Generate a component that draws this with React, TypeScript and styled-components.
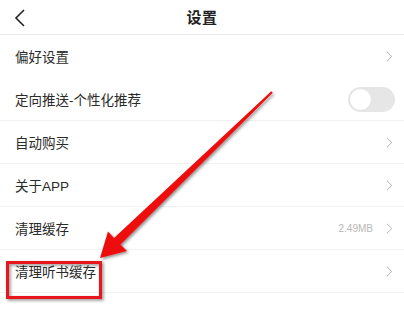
import React from "react";
import styled, { createGlobalStyle } from "styled-components";

const Global = createGlobalStyle`
  html, body { margin: 0; padding: 0; background: #fff; }
  body { font-family: "Liberation Sans", "Noto Sans CJK SC", sans-serif; }
`;

const Page = styled.div`
  position: relative;
  width: 404px;
  height: 322px;
  background: #fff;
  overflow: hidden;
`;

const Header = styled.div`
  height: 35px;
  display: flex;
  align-items: center;
  justify-content: center;
  position: relative;
  border-bottom: 1px solid #ececec;
  box-sizing: border-box;
`;

const BackButton = styled.div`
  position: absolute;
  left: 13px;
  top: 9px;
  width: 14px;
  height: 18px;
  display: flex;
`;

const Title = styled.div`
  font-size: 15px;
  font-weight: 700;
  color: #222;
  letter-spacing: 0.5px;
  margin-top: -1px;
`;

const List = styled.div`
  display: flex;
  flex-direction: column;
`;

const Row = styled.div<{ $divider?: boolean }>`
  height: 43px;
  box-sizing: border-box;
  display: flex;
  align-items: center;
  padding: 0 11px 0 15px;
  border-bottom: 1px solid ${(p) => (p.$divider ? "#f1f1f1" : "transparent")};
`;

const Label = styled.div`
  flex: 1;
  font-size: 13.5px;
  color: #2a2a2a;
`;

const Value = styled.div`
  font-size: 10px;
  color: #b8b8b8;
  margin-right: 13px;
`;

const Chevron = styled.div`
  width: 7px;
  height: 11px;
  display: flex;
`;

const Track = styled.div`
  width: 47px;
  height: 25px;
  border-radius: 13px;
  background: #e6e6e6;
  position: relative;
  margin-right: -2px;
`;

const Knob = styled.div`
  position: absolute;
  left: 1px;
  top: 1px;
  width: 21px;
  height: 21px;
  border-radius: 50%;
  background: #fff;
  border: 1px solid #e2e2e2;
`;

const Overlay = styled.svg`
  position: absolute;
  left: 0;
  top: 0;
  pointer-events: none;
`;

const ChevronIcon = () => (
  <svg width="7" height="11" viewBox="0 0 7 11">
    <path d="M1 0.8 L5.8 5.5 L1 10.2" fill="none" stroke="#b5b5b5" strokeWidth="1" />
  </svg>
);

const items: { label: string; kind: "chevron" | "toggle"; value?: string; divider: boolean }[] = [
  { label: "偏好设置", kind: "chevron", divider: false },
  { label: "定向推送-个性化推荐", kind: "toggle", divider: true },
  { label: "自动购买", kind: "chevron", divider: true },
  { label: "关于APP", kind: "chevron", divider: true },
  { label: "清理缓存", kind: "chevron", value: "2.49MB", divider: true },
  { label: "清理听书缓存", kind: "chevron", divider: true },
];

export default function App() {
  return (
    <>
      <Global />
      <Page>
        <Header>
          <BackButton>
            <svg width="14" height="18" viewBox="0 0 14 18">
              <path d="M11 1 L3 9 L11 17" fill="none" stroke="#222" strokeWidth="1.6" />
            </svg>
          </BackButton>
          <Title>设置</Title>
        </Header>
        <List>
          {items.map((it) => (
            <Row key={it.label} $divider={it.divider}>
              <Label>{it.label}</Label>
              {it.value && <Value>{it.value}</Value>}
              {it.kind === "chevron" ? (
                <Chevron>
                  <ChevronIcon />
                </Chevron>
              ) : (
                <Track>
                  <Knob />
                </Track>
              )}
            </Row>
          ))}
        </List>
        <Overlay width="404" height="322" viewBox="0 0 404 322">
          <defs>
            <filter id="sh" x="-20%" y="-20%" width="140%" height="140%">
              <feDropShadow dx="1.5" dy="1.5" stdDeviation="1.5" floodColor="#000" floodOpacity="0.45" />
            </filter>
          </defs>
          <rect x="7.5" y="262.5" width="93" height="35" fill="none" stroke="#e8141a" strokeWidth="3" filter="url(#sh)" />
          <polygon
            points="100,258 108,231.5 114,238 271.3,91.3 272.7,92.7 120.5,244.5 127,251"
            fill="#ee1111"
            filter="url(#sh)"
          />
        </Overlay>
      </Page>
    </>
  );
}
